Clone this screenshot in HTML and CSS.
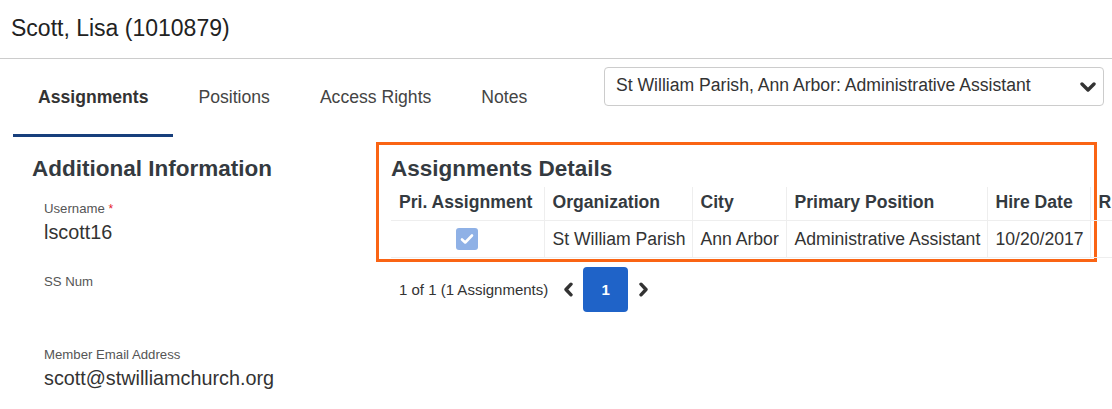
FILE: index.html
```html
<!DOCTYPE html>
<html lang="en">
<head>
  <meta charset="UTF-8">
  <title>Scott, Lisa (1010879)</title>
  <link rel="stylesheet" href="styles.css">
</head>
<body>

  <header class="page-head">
    <h1>Scott, Lisa (1010879)</h1>
  </header>

  <div class="toolbar">
    <nav class="tabs">
      <a class="tab active">Assignments</a>
      <a class="tab">Positions</a>
      <a class="tab">Access Rights</a>
      <a class="tab">Notes</a>
    </nav>

    <div class="picker">
      <span>St William Parish, Ann Arbor: Administrative Assistant</span>
      <svg class="caret" width="16" height="10" viewBox="0 0 16 10">
        <path d="M2 2l6 6 6-6" fill="none" stroke="#333" stroke-width="3.4" stroke-linecap="round" stroke-linejoin="round"/>
      </svg>
    </div>
  </div>

  <main class="content">
    <section class="info">
      <h2>Additional Information</h2>

      <div class="field">
        <div class="field-label">Username <span class="req">*</span></div>
        <div class="field-value">lscott16</div>
      </div>

      <div class="field">
        <div class="field-label">SS Num</div>
        <div class="field-value"></div>
      </div>

      <div class="field">
        <div class="field-label">Member Email Address</div>
        <div class="field-value">scott@stwilliamchurch.org</div>
      </div>
    </section>

    <section class="details">
      <div class="details-box">
        <h2>Assignments Details</h2>
        <table class="grid">
          <thead>
            <tr>
              <th class="c-pri">Pri. Assignment</th>
              <th class="c-org">Organization</th>
              <th class="c-city">City</th>
              <th class="c-pos">Primary Position</th>
              <th class="c-date">Hire Date</th>
              <th class="c-rel">R</th>
            </tr>
          </thead>
          <tbody>
            <tr>
              <td class="center">
                <span class="check">
                  <svg width="14" height="12" viewBox="0 0 14 12">
                    <path d="M2 6.5l3.2 3L12 2.5" fill="none" stroke="#fff" stroke-width="2.6" stroke-linecap="round" stroke-linejoin="round"/>
                  </svg>
                </span>
              </td>
              <td>St William Parish</td>
              <td>Ann Arbor</td>
              <td>Administrative Assistant</td>
              <td>10/20/2017</td>
              <td></td>
            </tr>
          </tbody>
        </table>
      </div>

      <div class="pager">
        <span class="pager-count">1 of 1 (1 Assignments)</span>
        <a class="pager-arrow">
          <svg width="11" height="15" viewBox="0 0 11 15"><path d="M8 2.2L3 7.5l5 5.3" fill="none" stroke="#333" stroke-width="3.4" stroke-linecap="round" stroke-linejoin="round"/></svg>
        </a>
        <a class="pager-page">1</a>
        <a class="pager-arrow">
          <svg width="11" height="15" viewBox="0 0 11 15"><path d="M3 2.2l5 5.3-5 5.3" fill="none" stroke="#333" stroke-width="3.4" stroke-linecap="round" stroke-linejoin="round"/></svg>
        </a>
      </div>
    </section>
  </main>

</body>
</html>
```

FILE: styles.css
```css
body { margin: 0; font-family: "Liberation Sans", Arial, sans-serif; color: #333; background: #fff; overflow: hidden; }

.page-head { padding: 15px 11px 16px; border-bottom: 1px solid #ccc; }
.page-head h1 { margin: 0; font-size: 23px; font-weight: normal; line-height: 27px; color: #222; }

.toolbar { display: flex; justify-content: space-between; align-items: flex-start; padding: 0 8px 0 13px; }
.tabs { display: flex; }
.tab { padding: 28px 25px 27px; font-size: 17.6px; line-height: 20px; color: #444; border-bottom: 3px solid transparent; }
.tab.active { font-weight: bold; color: #333; border-bottom-color: #173f7c; }

.picker { box-sizing: border-box; width: 500px; height: 39px; margin-top: 8px; padding: 0 7px 3px 11px; display: flex; align-items: center; justify-content: space-between; border: 1px solid #ccc; border-radius: 4px; font-size: 17.6px; color: #333; }
.caret { margin-top: 3px; }

.content { display: flex; align-items: flex-start; padding-left: 13px; }
h2 { margin: 0; font-size: 22.5px; line-height: 26px; font-weight: bold; color: #343a40; }

.info { width: 325px; padding: 19px 19px 0; }
.info h2 { margin-bottom: 19px; }
.field { padding-left: 12px; margin-bottom: 30px; }
.field-label { font-size: 13.2px; line-height: 16px; color: #555; }
.req { color: #e4202c; font-size: 12px; vertical-align: top; }
.field-value { margin-top: 3px; min-height: 24px; font-size: 19.8px; line-height: 24px; color: #333; }

.details { margin-top: 5px; }
.details-box { width: 697px; padding: 11px 6px 1px 12px; border: 3px solid #fa6414; }
.details-box h2 { margin-bottom: 5px; }

.grid { border-collapse: collapse; table-layout: fixed; width: 780px; font-size: 17.6px; }
.grid th, .grid td { box-sizing: border-box; white-space: nowrap; overflow: hidden; text-align: left; border-right: 1px solid #eee; border-bottom: 1px solid #eee; padding: 7px 8px; line-height: 22px; }
.grid th { padding: 5px 8px 8px 8px; line-height: 20px; font-weight: bold; color: #343a40; }
.grid td { color: #333; }
.grid .center { text-align: center; }
.c-pri { width: 153px; }
.c-org { width: 148px; }
.c-city { width: 94px; }
.c-pos { width: 201px; }
.c-date { width: 103px; }
.c-rel { width: 81px; }

.check { display: inline-block; width: 22px; height: 22px; border-radius: 3px; background: #8fb1e6; vertical-align: top; }
.check svg { display: block; margin: 5px 0 0 4px; }

.pager { display: flex; align-items: center; margin: 5px 0 0 23px; font-size: 15px; color: #333; }
.pager-count { margin-right: 10px; }
.pager-arrow { width: 20px; display: flex; justify-content: center; }
.pager-page { width: 45px; height: 45px; margin: 0 5px; display: flex; align-items: center; justify-content: center; background: #1f63c8; border-radius: 4px; color: #fff; font-weight: bold; }
```
